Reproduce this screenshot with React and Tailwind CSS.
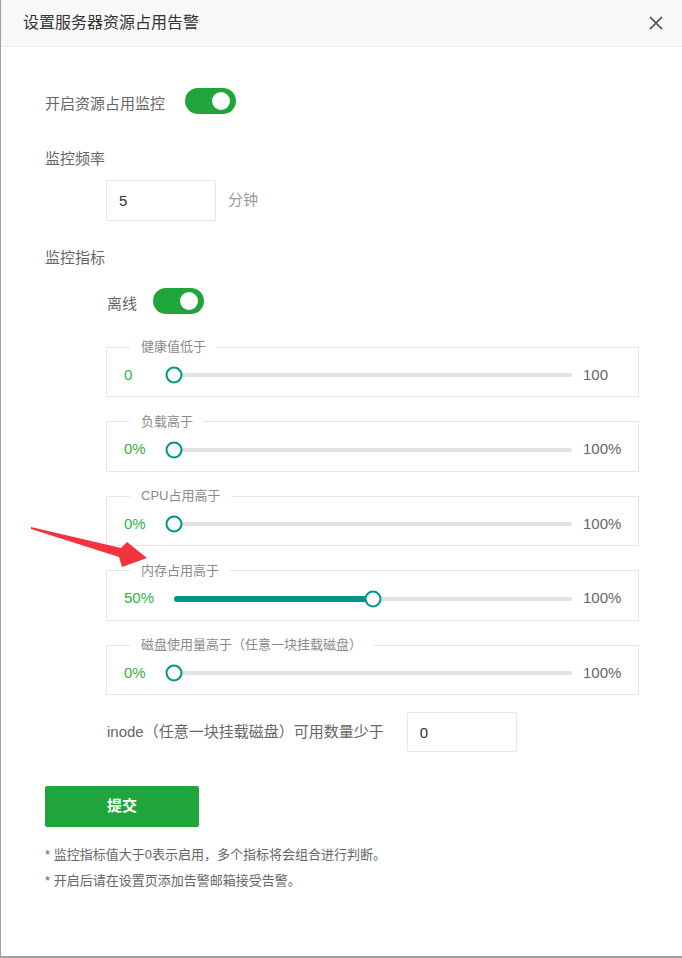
import React, { useState } from 'react';

const FONT = { fontFamily: '"Liberation Sans", "Noto Sans CJK SC", sans-serif' };

// 开关
const Toggle = ({ on, onChange }) => (
  <button
    type="button"
    onClick={() => onChange(!on)}
    className={`relative h-[26px] w-[51px] shrink-0 rounded-full ${on ? 'bg-[#20a53a]' : 'bg-[#d2d2d2]'}`}
  >
    <span
      className={`absolute top-[4px] h-[18px] w-[18px] rounded-full bg-white ${on ? 'right-[6px]' : 'left-[6px]'}`}
    />
  </button>
);

// 滑块区块
const SliderBox = ({ title, value, unit, max }) => (
  <fieldset className="mt-[16.5px] ml-[61px] w-[533px] border border-[#e6e6e6] first:mt-[18px]">
    <legend className="ml-[23px] px-[11px] text-[13px] leading-[16px] text-[#8a8a8a]">{title}</legend>
    <div className="flex h-[20px] items-center pl-[17px] mt-[10px] mb-[11px]">
      <span className="w-[50px] text-[15px] text-[#2fb344]">{value}{unit}</span>
      <div className="relative h-[4px] w-[398px] rounded-full bg-[#e2e2e2]">
        {value > 0 && (
          <div
            className="absolute left-0 top-[-1px] h-[6px] rounded-full bg-[#009688]"
            style={{ width: `${(value / max) * 100}%` }}
          />
        )}
        <span
          className="absolute top-1/2 h-[17px] w-[17px] -translate-x-1/2 -translate-y-1/2 rounded-full border-2 border-[#009688] bg-white"
          style={{ left: `${(value / max) * 100}%` }}
        />
      </div>
      <span className="ml-[11px] text-[15px] text-[#666]">{max}{unit}</span>
    </div>
  </fieldset>
);

const App = () => {
  const [enabled, setEnabled] = useState(true);
  const [offline, setOffline] = useState(true);

  const metrics = [
    { title: '健康值低于', value: 0, unit: '', max: 100 },
    { title: '负载高于', value: 0, unit: '%', max: 100 },
    { title: 'CPU占用高于', value: 0, unit: '%', max: 100 },
    { title: '内存占用高于', value: 50, unit: '%', max: 100 },
    { title: '磁盘使用量高于（任意一块挂载磁盘）', value: 0, unit: '%', max: 100 },
  ];

  return (
    <div
      className="relative h-[958px] w-[682px] overflow-hidden border-b-2 border-l border-[#a0a0a0] bg-white"
      style={FONT}
    >
      {/* 标题栏 */}
      <div className="flex h-[47px] items-center justify-between border-b border-[#eeeeee] bg-[#f8f8f8] pl-[22px] pr-[18px]">
        <span className="text-[16px] text-[#333]">设置服务器资源占用告警</span>
        <svg width="14" height="14" viewBox="0 0 14 14" className="mr-[1px]">
          <path d="M1 1L13 13M13 1L1 13" stroke="#4a4a4a" strokeWidth="1.7" fill="none" />
        </svg>
      </div>

      <div className="pl-[44px] pt-[41px]">
        <div className="flex items-center">
          <span className="text-[15px] text-[#666]">开启资源占用监控</span>
          <div className="ml-[20px]">
            <Toggle on={enabled} onChange={setEnabled} />
          </div>
        </div>

        <div className="mt-[28px] text-[15px] leading-[20px] text-[#666]">监控频率</div>
        <div className="mt-[11px] flex items-center">
          <input
            defaultValue="5"
            className="ml-[61px] h-[41px] w-[110px] rounded-[2px] border border-[#e6e6e6] pl-[12px] text-[15px] text-[#333] outline-none"
          />
          <span className="ml-[12px] text-[15px] text-[#999]">分钟</span>
        </div>

        <div className="mt-[27px] text-[15px] leading-[20px] text-[#666]">监控指标</div>
        <div className="mt-[20px] ml-[62px] flex items-center">
          <span className="text-[15px] text-[#666]">离线</span>
          <div className="ml-[16px]">
            <Toggle on={offline} onChange={setOffline} />
          </div>
        </div>

        <div className="flex flex-col">
          {metrics.map((m) => (
            <SliderBox key={m.title} {...m} />
          ))}
        </div>

        <div className="mt-[17px] ml-[62px] flex items-center">
          <span className="text-[15px] text-[#666]">inode（任意一块挂载磁盘）可用数量少于</span>
          <input
            defaultValue="0"
            className="ml-[23px] h-[40px] w-[110px] rounded-[2px] border border-[#e6e6e6] pl-[12px] text-[15px] text-[#333] outline-none"
          />
        </div>

        <button
          type="button"
          className="mt-[34px] h-[41px] w-[154px] rounded-[2px] bg-[#20a53a] text-[15px] font-bold text-white"
        >
          提交
        </button>

        <div className="mt-[15px] text-[13px] leading-[26px] text-[#666]">
          <p>* 监控指标值大于0表示启用，多个指标将会组合进行判断。</p>
          <p>* 开启后请在设置页添加告警邮箱接受告警。</p>
        </div>
      </div>

      {/* 标注箭头 */}
      <svg className="pointer-events-none absolute left-0 top-0" width="682" height="958">
        <polygon
          points="30,527 120,548 126,542 146,558 121,567 118,557 30,529"
          fill="#f5333f"
        />
      </svg>
    </div>
  );
};

export default App;
